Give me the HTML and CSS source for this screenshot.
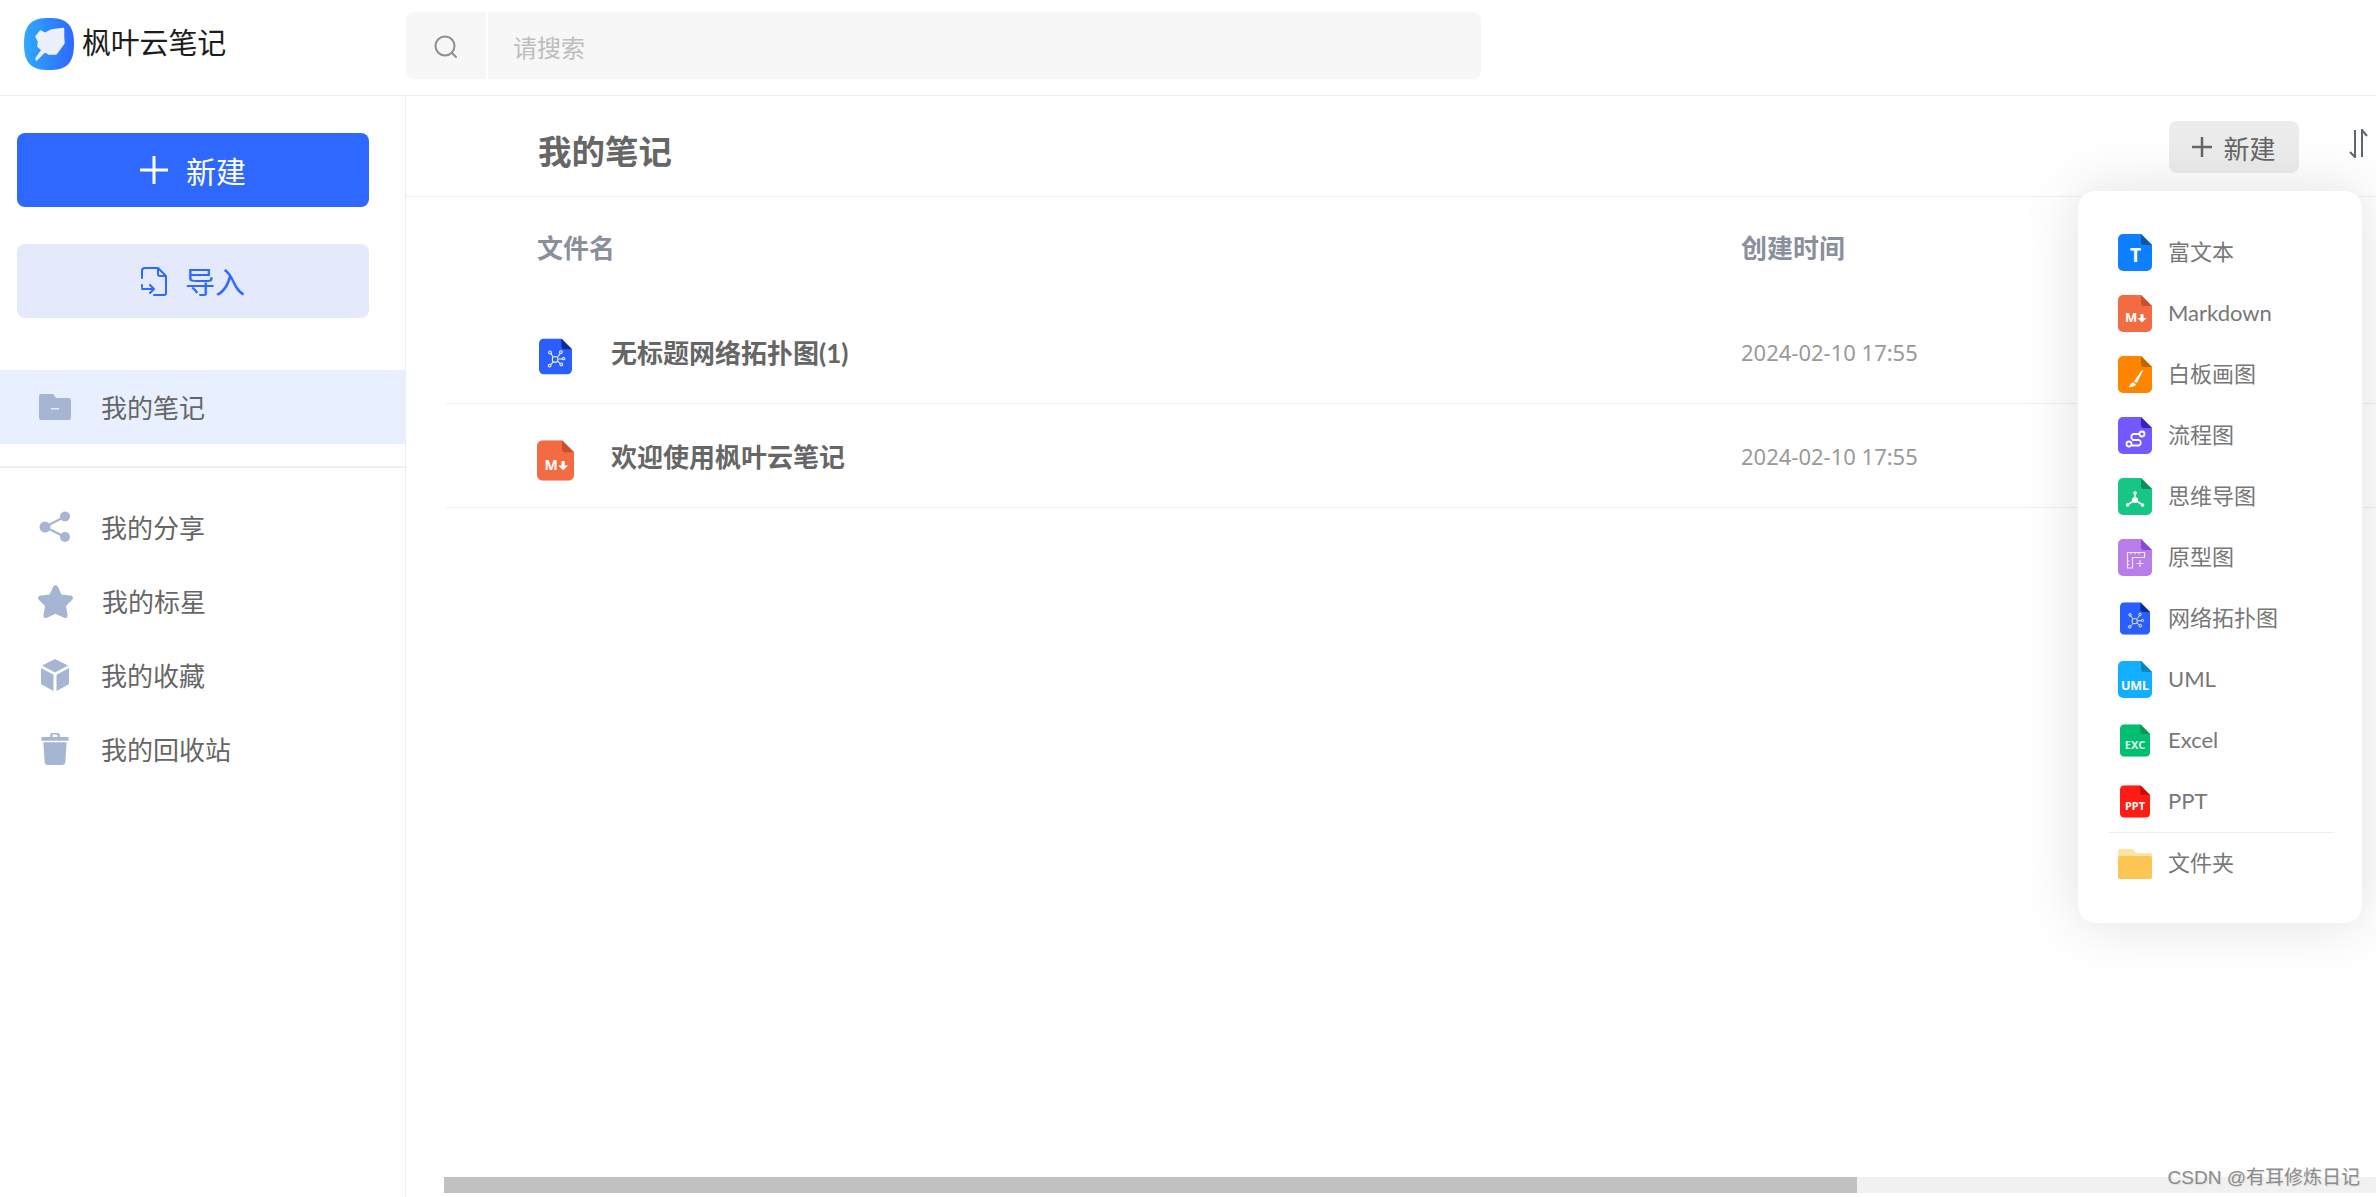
FILE: index.html
```html
<!DOCTYPE html>
<html lang="zh-CN">
<head>
<meta charset="utf-8">
<title>枫叶云笔记</title>
<link rel="stylesheet" href="styles.css">
</head>
<body>
<svg class="sprite" aria-hidden="true">
  <symbol id="doc" viewBox="0 0 34 37">
    <path class="doc-body" d="M5 0H23L34 11V32a5 5 0 0 1-5 5H5a5 5 0 0 1-5-5V5a5 5 0 0 1 5-5z"/>
    <path class="doc-fold" d="M23 0L34 11H26a3 3 0 0 1-3-3z"/>
  </symbol>
  <symbol id="net" viewBox="0 0 34 37">
    <g class="g-line" transform="translate(3.400 4.300) scale(.8)">
      <path d="M14 18l-3-4M20 18l3-4M21 21h5M20 24l3 3M14 25l-3 3"/>
      <rect x="13" y="18" width="7" height="7" rx="2"/>
      <circle cx="10" cy="12.500" r="1.800"/><circle cx="24" cy="12" r="1.800"/><circle cx="27.500" cy="20.500" r="1.500"/><circle cx="24.500" cy="28" r="1.800"/><circle cx="9.500" cy="29.500" r="1.800"/>
    </g>
  </symbol>
  <symbol id="mdg" viewBox="0 0 34 37">
    <text class="g-text" x="7" y="27" font-size="13">M</text>
    <path class="g-fill" d="M22.500 19h3v4h3l-4.500 4.500L19.500 23h3z"/>
  </symbol>
</svg>

<header class="topbar">
  <div class="brand">
    <svg class="logo" viewBox="0 0 50 52">
      <defs><linearGradient id="lg" x1="0" y1="0" x2="1" y2="0"><stop offset="0" stop-color="#2fa9ff"/><stop offset="1" stop-color="#2f68ff"/></linearGradient></defs>
      <path fill="url(#lg)" d="M25 0C41 0 50 5 50 26S41 52 25 52 0 47 0 26 9 0 25 0z"/>
      <path class="leaf" d="M16.500 13L21 15.500 27.500 12 39.500 10.500 39.500 18.500 40 25 36.500 30 32 36 25 36 21 33.500 12.500 42 12 40.500 18 32 14 28.500 14.500 23.500 12 18.500z"/>
    </svg>
    <span class="brand-name">枫叶云笔记</span>
  </div>
  <div class="search">
    <div class="search-icon">
      <svg viewBox="0 0 24 24" class="i-search"><circle cx="11" cy="11" r="9.500"/><path d="M18 18l4 4"/></svg>
    </div>
    <div class="search-input">请搜索</div>
  </div>
</header>

<div class="layout">
  <aside class="sidebar">
    <button class="btn btn-primary">
      <svg class="btn-ic" viewBox="0 0 28 28"><path d="M14 0v28M0 14h28"/></svg>
      <span>新建</span>
    </button>
    <button class="btn btn-soft">
      <svg class="btn-ic ic-import" viewBox="0 0 26 29"><path d="M1 11V4a3 3 0 0 1 3-3h13l8 8v17a2 2 0 0 1-2 2H13M17 1v6a2 2 0 0 0 2 2h6M1 22h12M9 18l4 4-4 4M1 18v2"/></svg>
      <span>导入</span>
    </button>
    <nav class="nav nav-main">
      <a class="nav-item active">
        <svg class="nav-ic" viewBox="0 0 32 26"><path d="M2 0h12l3 4h13a2 2 0 0 1 2 2v18a2 2 0 0 1-2 2H2a2 2 0 0 1-2-2V2a2 2 0 0 1 2-2z"/><path class="cut" d="M12 14h8v1.500h-8z"/></svg>
        <span>我的笔记</span>
      </a>
    </nav>
    <div class="nav-sep"></div>
    <nav class="nav">
      <a class="nav-item">
        <svg class="nav-ic" viewBox="0 0 32 32"><circle cx="6" cy="16" r="5.500"/><circle cx="26" cy="5.500" r="5"/><circle cx="26" cy="26" r="5"/><path class="st" d="M6 16L26 5.500M6 16l20 10"/></svg>
        <span>我的分享</span>
      </a>
      <a class="nav-item star-row">
        <svg class="nav-ic ic-star" viewBox="0 0 35 33"><path d="M17.500 0c1.200 0 2 1 2.500 2l3.500 7.500 8.500 1c3 .4 3.800 2.500 2 4.500l-6 6 1.500 9c.4 2.800-1.500 3.600-3.500 2.700l-8.500-4-8.500 4c-2 .9-3.900.1-3.500-2.700l1.500-9-6-6c-1.800-2-1-4.100 2-4.500l8.500-1L15 2c.5-1 1.300-2 2.500-2z"/></svg>
        <span>我的标星</span>
      </a>
      <a class="nav-item">
        <svg class="nav-ic" viewBox="0 0 28 32"><path d="M14 0l13 6.500-13 7-13-7z"/><path d="M0 9l12.500 6.800V32L1.500 26C.5 25.500 0 24.500 0 23.500z"/><path d="M28 9l-12.500 6.800V32l11-6c1-.5 1.500-1.500 1.500-2.500z"/></svg>
        <span>我的收藏</span>
      </a>
      <a class="nav-item">
        <svg class="nav-ic" viewBox="0 0 28 33"><path d="M0 4h9V2a2 2 0 0 1 2-2h6a2 2 0 0 1 2 2v2h9v4H0zM11.500 1.500v2.500h5V1.500z"/><path d="M2 9.500h24l-1.300 20a3.500 3.500 0 0 1-3.500 3.500H6.800a3.500 3.500 0 0 1-3.500-3.500z"/></svg>
        <span>我的回收站</span>
      </a>
    </nav>
  </aside>

  <main class="content">
    <div class="content-head">
      <h1 class="title">我的笔记</h1>
      <button class="btn-new">
        <svg viewBox="0 0 20 20" class="btn-new-ic"><path d="M10 0v20M0 10h20"/></svg>
        <span>新建</span>
      </button>
      <svg class="sort" viewBox="0 0 19 29"><path d="M6 1v27L1 23M13 28V1l5 6"/></svg>
    </div>

    <div class="table">
      <div class="row row-head">
        <div class="col-name">文件名</div>
        <div class="col-time">创建时间</div>
      </div>
      <div class="row">
        <div class="col-name file">
          <span class="file-ic"><svg class="doc c-net w32" viewBox="0 0 34 37"><use href="#doc"/><use href="#net"/></svg></span>
          <span>无标题网络拓扑图(1)</span>
        </div>
        <div class="col-time date">2024-02-10 17:55</div>
      </div>
      <div class="row">
        <div class="col-name file">
          <span class="file-ic"><svg class="doc c-md w37" viewBox="0 0 34 37"><use href="#doc"/><use href="#mdg"/></svg></span>
          <span>欢迎使用枫叶云笔记</span>
        </div>
        <div class="col-time date">2024-02-10 17:55</div>
      </div>
    </div>

    <div class="hscroll"><div class="hscroll-thumb"></div></div>
  </main>
</div>

<div class="menu">
  <ul class="menu-list">
    <li class="menu-item"><span class="menu-ic"><svg class="doc c-t" viewBox="0 0 34 37"><use href="#doc"/><text class="g-text" x="17.500" y="28" font-size="19" text-anchor="middle">T</text></svg></span>富文本</li>
    <li class="menu-item lat"><span class="menu-ic"><svg class="doc c-md" viewBox="0 0 34 37"><use href="#doc"/><use href="#mdg"/></svg></span>Markdown</li>
    <li class="menu-item"><span class="menu-ic"><svg class="doc c-board" viewBox="0 0 34 37"><use href="#doc"/><path class="g-fill" d="M24 14l1 .6-6 12.400-3-1.500zM15 26.500l3 1.600c-.5 2-3 3.400-7.500 3 1.500-1 1.500-2 2-3 .5-1 1.500-1.600 2.500-1.600z"/></svg></span>白板画图</li>
    <li class="menu-item"><span class="menu-ic"><svg class="doc c-flow" viewBox="0 0 34 37"><use href="#doc"/><g class="g-line w2"><circle cx="24" cy="17" r="2.500"/><circle cx="11" cy="27" r="2.500"/><path d="M21.500 17H15a3.500 3.500 0 0 0 0 6h6a3 3 0 0 1 0 5.500l-7 .0"/></g></svg></span>流程图</li>
    <li class="menu-item"><span class="menu-ic"><svg class="doc c-mind" viewBox="0 0 34 37"><use href="#doc"/><path class="g-stroke" d="M17 15v7l-7 4.500M17 22l7 4.500"/><circle class="g-fill" cx="17" cy="22" r="3"/><circle class="g-fill" cx="17" cy="15" r="1.800"/><circle class="g-fill" cx="9.500" cy="27" r="1.800"/><circle class="g-fill" cx="24.500" cy="27" r="1.800"/></svg></span>思维导图</li>
    <li class="menu-item"><span class="menu-ic"><svg class="doc c-proto" viewBox="0 0 34 37"><use href="#doc"/><path class="g-stroke thin" d="M9.500 13.500h17v5h-12v10.500h-5zM13 13.500v2M17 13.500v2M21 13.500v2M9.500 22h2M9.500 25.500h2M22 21v7M18.500 24.500h7"/></svg></span>原型图</li>
    <li class="menu-item"><span class="menu-ic"><svg class="doc c-net small" viewBox="0 0 34 37"><use href="#doc"/><use href="#net"/></svg></span>网络拓扑图</li>
    <li class="menu-item lat"><span class="menu-ic"><svg class="doc c-uml" viewBox="0 0 34 37"><use href="#doc"/><text class="g-text" x="17" y="29" font-size="12.500" text-anchor="middle">UML</text></svg></span>UML</li>
    <li class="menu-item lat"><span class="menu-ic"><svg class="doc c-exc small" viewBox="0 0 34 37"><use href="#doc"/><text class="g-text exc" x="17" y="28" font-size="12.500" text-anchor="middle">EXC</text></svg></span>Excel</li>
    <li class="menu-item lat"><span class="menu-ic"><svg class="doc c-ppt small" viewBox="0 0 34 37"><use href="#doc"/><text class="g-text" x="17" y="28" font-size="12.500" text-anchor="middle">PPT</text></svg></span>PPT</li>
  </ul>
  <div class="menu-sep"></div>
  <div class="menu-item"><span class="menu-ic"><svg class="folder" viewBox="0 0 34 30"><path fill="#fde3a4" d="M2 0h13l3 4h14a2 2 0 0 1 2 2v8H0V2a2 2 0 0 1 2-2z"/><path fill="#fbc653" d="M2 7h30a2 2 0 0 1 2 2v19a2 2 0 0 1-2 2H2a2 2 0 0 1-2-2V9a2 2 0 0 1 2-2z"/></svg></span>文件夹</div>
</div>

<div class="watermark">CSDN @有耳修炼日记</div>
</body>
</html>
```
FILE: styles.css
```css
* { box-sizing: border-box; }
html, body { margin: 0; height: 100%; }
body {
  display: flex;
  flex-direction: column;
  overflow: hidden;
  background: #fff;
  color: #666;
  font-family: "Lato", "Noto Sans CJK SC", sans-serif;
}
.sprite { display: none; }
svg { display: block; flex: none; }

.topbar {
  height: 96px;
  flex: none;
  display: flex;
  border-bottom: 1px solid #eeeeee;
  padding-top: 12px;
}
.brand { width: 406px; height: 64px; padding: 6px 0 0 24px; display: flex; align-items: flex-start; gap: 8px; }
.logo { width: 50px; height: 52px; }
.leaf { fill: #eaf1fd; stroke: #eaf1fd; stroke-width: 1.500; stroke-linejoin: round; }
.brand-name { font-size: 29px; line-height: 50px; color: #1c1c1c; letter-spacing: -.2px; }
.search { display: flex; width: 1075px; height: 67px; gap: 2px; }
.search-icon { width: 80px; background: #f7f7f8; border-radius: 8px 0 0 8px; display: flex; align-items: center; justify-content: center; padding-top: 2px; }
.i-search { width: 24px; height: 24px; fill: none; stroke: #8a8f8f; stroke-width: 2; stroke-linecap: round; }
.search-input { flex: 1; background: #f7f7f7; border-radius: 0 8px 8px 0; padding-left: 25px; line-height: 71px; font-size: 24px; color: #bdbdbd; }

.layout { flex: 1; display: flex; min-height: 0; }
.sidebar { width: 406px; flex: none; border-right: 1px solid #eeeeee; padding-top: 37px; }
.btn {
  display: flex; align-items: center; justify-content: center; gap: 18px;
  width: 352px; height: 74px; margin: 0 0 37px 17px; padding: 0;
  border: 0; border-radius: 8px; font: inherit; font-size: 30px;
}
.btn-primary { background: #2f68ff; color: #fff; }
.btn-soft { background: #e4eafb; color: #2f68ff; padding-bottom: 3px; }
.btn-soft svg { margin-top: 3px; }
.btn-ic { width: 28px; height: 28px; fill: none; stroke: #fff; stroke-width: 3; }
.ic-import { width: 26px; height: 29px; stroke: #2f68ff; stroke-width: 2; stroke-linecap: round; stroke-linejoin: round; }

.nav-main { margin-top: 52px; }
.nav-sep { height: 2px; background: #eeeeee; margin: 22px 0; }
.nav-item { display: flex; align-items: center; height: 74px; padding: 0 0 2px 39px; font-size: 26px; color: #666; }
.nav-item span { margin-left: 30px; }
.nav-item.active { background: #e8efff; }
.nav-ic { width: 32px; height: 32px; margin-top: 2px; fill: #a6b6d2; }
.nav-ic .cut { fill: #e8efff; }
.nav-ic .st { fill: none; stroke: #a6b6d2; stroke-width: 2.500; }
.star-row span { margin-left: 29px; }
.star-row .ic-star { width: 35px; height: 33px; margin-left: -1px; }

.content { flex: 1; min-width: 0; display: flex; flex-direction: column; }
.content-head {
  height: 101px; flex: none;
  display: flex; align-items: flex-start;
  border-bottom: 1px solid #eeeeee;
  padding: 25px 0 0 132px;
}
.title { margin: 0; flex: 1; font-size: 33.500px; line-height: 60px; font-weight: 700; color: #666; }
.btn-new {
  display: flex; align-items: center; justify-content: center; gap: 11px;
  width: 130px; height: 52px; border: 0; border-radius: 8px;
  background: #ececec; color: #666; font: inherit; font-size: 26px;
}
.btn-new-ic { width: 20px; height: 20px; fill: none; stroke: #666; stroke-width: 2.500; }
.sort { width: 19px; height: 29px; margin: 8px 8px 0 50px; fill: none; stroke: #5f6670; stroke-width: 2; }

.table { flex: 1; padding-left: 40px; }
.row { display: flex; height: 104px; align-items: center; border-bottom: 1px solid #eeeeee; padding-left: 91px; }
.row-head { height: 103px; padding-bottom: 4px; border-bottom: 0; font-weight: 700; font-size: 26px; color: #8a8f9c; }
.col-name { width: 1204px; }
.file { display: flex; align-items: center; font-size: 26px; font-weight: 700; color: #666; }
.file-ic { width: 74px; display: flex; justify-content: center; padding: 9px 37px 0 0; }
.date { font-size: 22px; color: #999; font-family: "Noto Sans", "Noto Sans CJK SC", sans-serif; }

.doc { width: 34px; height: 37px; }
.doc.small { width: 30px; height: 33px; }
.doc.w32 { width: 33px; height: 37px; }
.doc.w37 { width: 37px; height: 41px; }
.doc-body { fill: var(--c); }
.doc-fold { fill: var(--f); }
.c-t { --c: #0e80ff; --f: #0c56a8; }
.c-md { --c: #f26b43; --f: #c9502b; }
.c-board { --c: #ff8400; --f: #c26400; }
.c-flow { --c: #7558ff; --f: #3d1fb3; }
.c-mind { --c: #17c684; --f: #0b8f58; }
.c-proto { --c: #b87de8; --f: #8848d8; }
.c-net { --c: #2a5eff; --f: #0b2a9c; }
.c-uml { --c: #12aeff; --f: #0a86bb; }
.c-exc { --c: #00bf71; --f: #0a9558; }
.c-ppt { --c: #ff1c14; --f: #c21008; }
.g-text { font-family: "Noto Sans", "Lato", sans-serif; font-weight: 700; fill: #fff; }
.g-text.exc { fill: #dff7ec; }
.g-fill { fill: #fff; }
.g-stroke { fill: none; stroke: #fff; stroke-width: 1.500; }
.g-stroke.thin { stroke: #f0e4fb; stroke-width: 1.200; }
.g-line { fill: none; stroke: #fff; stroke-width: 1.300; }
.g-line.w2 { stroke-width: 1.800; }

.hscroll { flex: none; height: 16px; margin: 0 0 4px 38px; background: #f1f1f1; }
.hscroll-thumb { width: 1413px; height: 100%; background: #c1c1c1; }

.menu {
  position: absolute;
  top: 190px; right: 13px;
  width: 286px; height: 734px;
  padding: 31px 29px 0 30px;
  background: #fff;
  border: 1px solid #f3f3f3;
  border-radius: 18px;
  box-shadow: 0 0 60px rgba(0, 0, 0, .12);
}
.menu-list { list-style: none; margin: 0; padding: 0; }
.menu-item { display: flex; align-items: center; height: 61px; padding: 0 0 6px 10px; font-size: 22px; color: #777; }
.menu-item.lat { padding-bottom: 3px; }
.menu-ic { width: 34px; margin: 6px 16px 0 0; display: flex; justify-content: center; }
.lat .menu-ic { margin-top: 3px; }
.menu-sep { height: 1px; background: #eeeeee; width: 226px; }
.folder { width: 34px; height: 30px; }

.watermark {
  position: absolute;
  right: 16px; bottom: 7px;
  font-family: "Liberation Sans", "Noto Sans CJK SC", sans-serif;
  font-size: 19px; line-height: 24px;
  color: #8c8c8c;
  text-shadow: 1px 1px 1px #dcdcdc;
}
```
